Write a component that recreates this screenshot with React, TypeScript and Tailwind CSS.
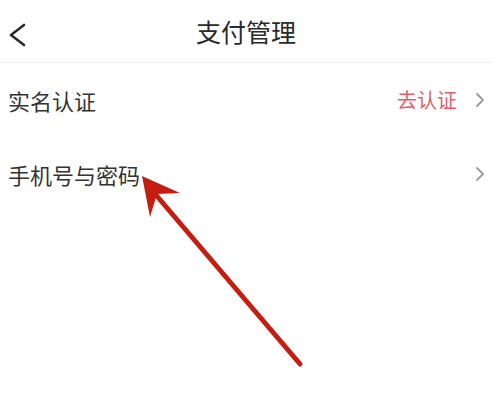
import { FC } from 'react';

const font = { fontFamily: '"Noto Sans CJK SC", "Noto Sans", sans-serif' };

const ChevronRight: FC = () => (
  <svg width="10" height="16" viewBox="0 0 10 16" fill="none">
    <path d="M2 2l6 6-6 6" stroke="#9a9a9a" strokeWidth="1.8" strokeLinecap="round" strokeLinejoin="round" />
  </svg>
);

const Row: FC<{ label: string; action?: string }> = ({ label, action }) => (
  <div className="h-[74px] flex items-center justify-between pl-2 pr-[7px]">
    <span className="text-[22px] text-[#333333] leading-none">{label}</span>
    <div className="flex items-center gap-[18px]">
      {action && <span className="text-[20px] text-[#e0606c] leading-none">{action}</span>}
      <ChevronRight />
    </div>
  </div>
);

const App: FC = () => {
  return (
    <div className="relative w-[492px] h-[415px] bg-white overflow-hidden" style={font}>
      <div className="h-[63px] grid grid-cols-[1fr_auto_1fr] items-center border-b border-[#f0f0f0] pt-[1px]">
        <div className="pl-[8px] pt-[6px] flex items-center">
          <svg width="18" height="24" viewBox="0 0 18 24" fill="none">
            <path d="M16 2L3 12l13 10" stroke="#2a2a2a" strokeWidth="2.6" strokeLinecap="round" strokeLinejoin="round" />
          </svg>
        </div>
        <span className="text-[25px] text-[#2a2a2a] leading-none">支付管理</span>
        <div />
      </div>
      <Row label="实名认证" action="去认证" />
      <Row label="手机号与密码" />

      <svg className="absolute left-0 top-0 pointer-events-none" width="492" height="415" viewBox="0 0 492 415">
        <line x1="300" y1="364" x2="156" y2="195" stroke="#c41e12" strokeWidth="5" strokeLinecap="round" />
        <polygon points="142,176 180,193 157,194 150,217" fill="#c41e12" />
      </svg>
    </div>
  );
};

export default App;
